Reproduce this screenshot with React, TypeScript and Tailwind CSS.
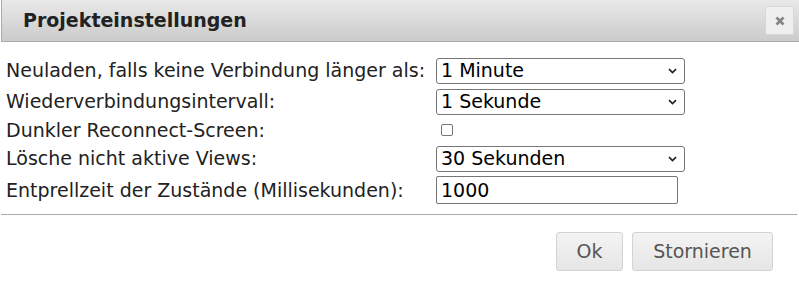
import React from "react";

const font = { fontFamily: '"DejaVu Sans", Verdana, sans-serif' };

function Chevron() {
  return (
    <svg width="9" height="6" viewBox="0 0 9 6" className="absolute right-[8px] top-1/2 -translate-y-1/2">
      <path d="M1 1.2 L4.5 4.6 L8 1.2" fill="none" stroke="#222" strokeWidth="1.7" />
    </svg>
  );
}

function Select({ value }: { value: string }) {
  return (
    <div className="relative w-[249px]">
      <select
        defaultValue={value}
        className="w-full h-[26px] appearance-none border border-[#767676] rounded-[3px] bg-white pl-[4px] pr-6 text-[19px] leading-none text-black"
      >
        <option>{value}</option>
      </select>
      <Chevron />
    </div>
  );
}

export default function App() {
  return (
    <div className="w-[799px] h-[292px] bg-white text-[#222] overflow-hidden" style={font}>
      <div className="ml-px h-[42px] flex items-center justify-between border-l border-b border-[#aaa] bg-gradient-to-b from-[#e9e9e9] to-[#cbcbcb] pl-[21px] pr-[5px]">
        <span className="text-[19px] font-bold text-[#222]">Projekteinstellungen</span>
        <button className="w-[29px] h-[29px] flex items-center justify-center border border-[#d8d8d8] bg-[#efefef] rounded-[2px]">
          <svg width="10" height="10" viewBox="0 0 10 10">
            <path d="M1.5 1.5 L8.5 8.5 M8.5 1.5 L1.5 8.5" stroke="#858585" strokeWidth="2.6" />
          </svg>
        </button>
      </div>

      <div className="mt-[13px] pl-[6px] text-[19px]">
        <div className="flex items-center h-[31px]">
          <label className="w-[430px] whitespace-nowrap">Neuladen, falls keine Verbindung länger als:</label>
          <Select value="1 Minute" />
        </div>
        <div className="flex items-center h-[31px]">
          <label className="w-[430px] whitespace-nowrap">Wiederverbindungsintervall:</label>
          <Select value="1 Sekunde" />
        </div>
        <div className="flex items-center h-[26px]">
          <label className="w-[435px] whitespace-nowrap">Dunkler Reconnect-Screen:</label>
          <input type="checkbox" className="appearance-none w-[12px] h-[12px] border border-[#767676] rounded-[2px] bg-white" />
        </div>
        <div className="flex items-center h-[31px]">
          <label className="w-[430px] whitespace-nowrap">Lösche nicht aktive Views:</label>
          <Select value="30 Sekunden" />
        </div>
        <div className="flex items-center h-[32px]">
          <label className="w-[430px] whitespace-nowrap">Entprellzeit der Zustände (Millisekunden):</label>
          <input
            type="text"
            defaultValue="1000"
            className="w-[242px] h-[28px] border border-[#767676] rounded-[2px] px-[4px] text-[19px] text-black"
          />
        </div>
      </div>

      <div className="mt-[8px] ml-px mr-[2px] border-t border-[#aaa]" />

      <div className="flex justify-end gap-[9px] pr-[26px] mt-[17px]">
        <button className="w-[67px] h-[39px] border border-[#d3d3d3] rounded-[3px] bg-gradient-to-b from-[#f3f3f3] to-[#e6e6e6] text-[19px] text-[#555]">
          Ok
        </button>
        <button className="w-[141px] h-[39px] border border-[#d3d3d3] rounded-[3px] bg-gradient-to-b from-[#f3f3f3] to-[#e6e6e6] text-[19px] text-[#555]">
          Stornieren
        </button>
      </div>
    </div>
  );
}
